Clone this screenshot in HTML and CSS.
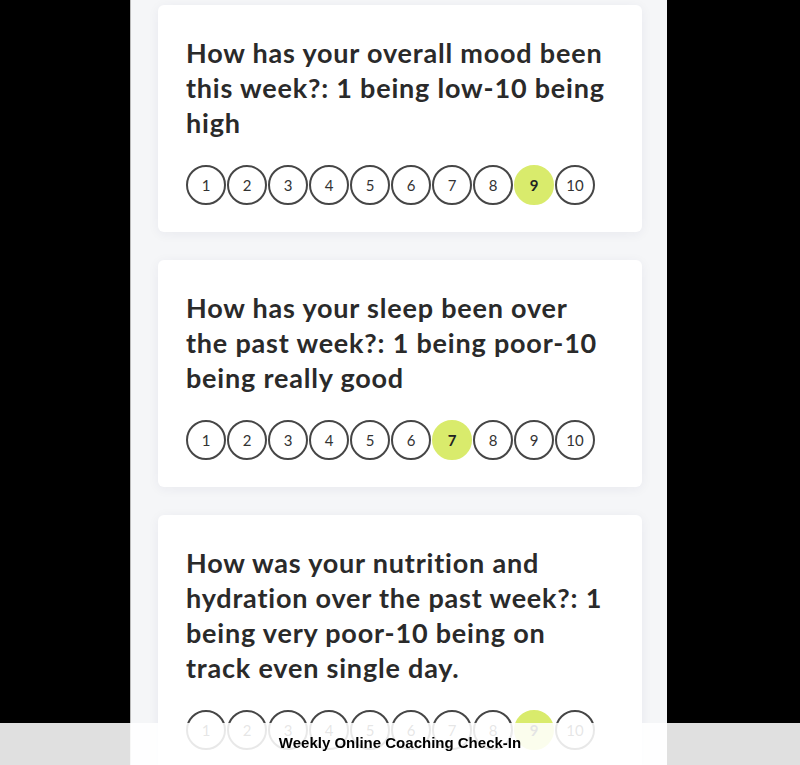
FILE: index.html
```html
<!DOCTYPE html>
<html lang="en">
<head>
    <meta charset="UTF-8">
    <meta name="viewport" content="width=device-width, initial-scale=1.0">
    <title>Weekly Online Coaching Check-In</title>
    <link rel="stylesheet" href="styles.css">
</head>
<body>
    <div class="page">
        <div class="card">
            <h2 class="question">How has your overall mood been this week?: 1 being low-10 being high</h2>
            <div class="scale">
                <span class="dot">1</span>
                <span class="dot">2</span>
                <span class="dot">3</span>
                <span class="dot">4</span>
                <span class="dot">5</span>
                <span class="dot">6</span>
                <span class="dot">7</span>
                <span class="dot">8</span>
                <span class="dot selected">9</span>
                <span class="dot">10</span>
            </div>
        </div>

        <div class="card">
            <h2 class="question">How has your sleep been over the past week?: 1 being poor-10 being really good</h2>
            <div class="scale">
                <span class="dot">1</span>
                <span class="dot">2</span>
                <span class="dot">3</span>
                <span class="dot">4</span>
                <span class="dot">5</span>
                <span class="dot">6</span>
                <span class="dot selected">7</span>
                <span class="dot">8</span>
                <span class="dot">9</span>
                <span class="dot">10</span>
            </div>
        </div>

        <div class="card">
            <h2 class="question">How was your nutrition and hydration over the past week?: 1 being very poor-10 being on track even single day.</h2>
            <div class="scale">
                <span class="dot">1</span>
                <span class="dot">2</span>
                <span class="dot">3</span>
                <span class="dot">4</span>
                <span class="dot">5</span>
                <span class="dot">6</span>
                <span class="dot">7</span>
                <span class="dot">8</span>
                <span class="dot selected">9</span>
                <span class="dot">10</span>
            </div>
        </div>
    </div>

    <div class="footer-bar">Weekly Online Coaching Check-In</div>
</body>
</html>
```

FILE: styles.css
```css
body {
    margin: 0;
    background-color: #000;
    font-family: "Lato", "Open Sans", sans-serif;
}

.page {
    width: 537px;
    margin-left: 130px;
    min-height: 765px;
    box-sizing: border-box;
    padding: 5px 25px 40px 27px;
    background-color: #f5f6f8;
    border-left: 1px solid #bbb;
    display: flex;
    flex-direction: column;
    gap: 28px;
}

.card {
    background-color: #fff;
    border-radius: 6px;
    padding: 30px 32px 27px 28px;
    box-shadow: 0 2px 12px rgba(30, 40, 80, 0.06);
}

.question {
    margin: 0;
    font-size: 27px;
    line-height: 35px;
    font-weight: 700;
    letter-spacing: 0.8px;
    color: #2a2a2a;
}

.scale {
    display: flex;
    gap: 1px;
    margin-top: 25px;
}

.dot {
    width: 40px;
    height: 40px;
    box-sizing: border-box;
    border: 2px solid #464646;
    border-radius: 50%;
    display: flex;
    align-items: center;
    justify-content: center;
    font-size: 15px;
    color: #333;
}

.dot.selected {
    background-color: #d9eb6c;
    border-color: #d9eb6c;
    font-weight: 700;
    color: #222;
}

.footer-bar {
    position: fixed;
    left: 0;
    right: 0;
    bottom: 0;
    height: 42px;
    box-sizing: border-box;
    padding-bottom: 4px;
    background-color: rgba(255, 255, 255, 0.88);
    display: flex;
    align-items: center;
    justify-content: center;
    font-family: "Liberation Sans", Arial, sans-serif;
    font-weight: 700;
    font-size: 15px;
    color: #000;
}
```
